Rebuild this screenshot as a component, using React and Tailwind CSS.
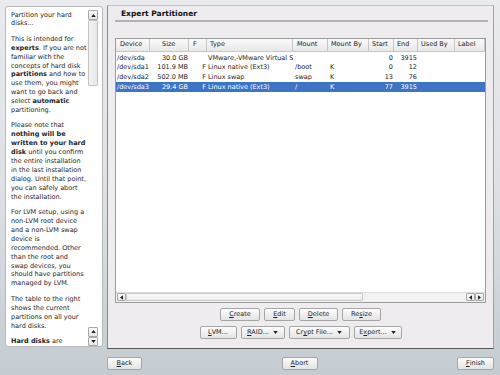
import React from "react";

const FONT = "font-['DejaVu_Sans','Liberation_Sans',sans-serif]";

function Tri({ dir = "down", className = "" }) {
  const pts = {
    down: "0,0 6,0 3,4",
    up: "0,4 6,4 3,0",
    left: "4,0 4,6 0,3",
    right: "0,0 0,6 4,3",
  }[dir];
  const vb = dir === "left" || dir === "right" ? "0 0 4 6" : "0 0 6 4";
  return (
    <svg viewBox={vb} className={className}>
      <polygon points={pts} fill="#222" />
    </svg>
  );
}

function Btn({ className = "", children }) {
  return (
    <div
      className={
        "flex items-center justify-center h-[13px] rounded-[2px] border border-[#a6a6a6] bg-linear-to-b from-[#fdfdfd] to-[#e4e4e4] text-[6.5px] leading-none text-[#222] whitespace-nowrap " +
        className
      }
    >
      {children}
    </div>
  );
}

function U({ children }) {
  return <span className="underline underline-offset-[0.5px] decoration-[0.5px]">{children}</span>;
}

const cols = [
  { label: "Device", w: "w-[34px]", h: "pl-[4px]", c: "pl-[1px]" },
  { label: "Size", w: "w-[39px]", h: "pl-[12px]", c: "justify-end pr-[1px]" },
  { label: "F", w: "w-[18px]", h: "pl-[4px]", c: "justify-end pr-[1px]" },
  { label: "Type", w: "w-[86px]", h: "pl-[3px]", c: "pl-[1px]" },
  { label: "Mount", w: "w-[35px]", h: "pl-[4px]", c: "pl-[2px]" },
  { label: "Mount By", w: "w-[41px]", h: "pl-[3px]", c: "pl-[2px]" },
  { label: "Start", w: "w-[25px]", h: "pl-[3px]", c: "justify-end pr-[1px]" },
  { label: "End", w: "w-[24px]", h: "pl-[3px]", c: "justify-end pr-[1px]" },
  { label: "Used By", w: "w-[37px]", h: "pl-[3px]", c: "pl-[2px]" },
  { label: "Label", w: "w-[30px]", h: "pl-[3px]", c: "pl-[2px]" },
];

const rows = [
  ["/dev/sda", "30.0 GB", "", "VMware,-VMware Virtual S", "", "", "0", "3915", "", ""],
  ["/dev/sda1", "101.9 MB", "F", "Linux native (Ext3)", "/boot", "K", "0", "12", "", ""],
  ["/dev/sda2", "502.0 MB", "F", "Linux swap", "swap", "K", "13", "76", "", ""],
  ["/dev/sda3", "29.4 GB", "F", "Linux native (Ext3)", "/", "K", "77", "3915", "", ""],
];

function LeftHelp() {
  const p = "mb-[6.5px]";
  return (
    <div className="flex-1 overflow-hidden pl-[5px] pt-[3.5px] text-[6.5px] leading-[8.9px] text-[#1e1e1e] whitespace-nowrap">
      <p className={p}>
        Partition your hard
        <br />
        disks...
      </p>
      <p className={p}>
        This is intended for
        <br />
        <b>experts</b>. If you are not
        <br />
        familiar with the
        <br />
        concepts of hard disk
        <br />
        <b>partitions</b> and how to
        <br />
        use them, you might
        <br />
        want to go back and
        <br />
        select <b>automatic</b>
        <br />
        partitioning.
      </p>
      <p className={p}>
        Please note that
        <br />
        <b>nothing will be</b>
        <br />
        <b>written to your hard</b>
        <br />
        <b>disk</b> until you confirm
        <br />
        the entire installation
        <br />
        in the last installation
        <br />
        dialog. Until that point,
        <br />
        you can safely abort
        <br />
        the installation.
      </p>
      <p className={p}>
        For LVM setup, using a
        <br />
        non-LVM root device
        <br />
        and a non-LVM swap
        <br />
        device is
        <br />
        recommended. Other
        <br />
        than the root and
        <br />
        swap devices, you
        <br />
        should have partitions
        <br />
        managed by LVM.
      </p>
      <p className={p}>
        The table to the right
        <br />
        shows the current
        <br />
        partitions on all your
        <br />
        hard disks.
      </p>
      <p>
        <b>Hard disks</b> are
      </p>
    </div>
  );
}

function ArrowBox({ dir, className = "" }) {
  return (
    <div
      className={
        "flex items-center justify-center rounded-[1px] border border-[#a8a8a8] bg-linear-to-b from-[#fbfbfb] to-[#e6e6e6] " +
        className
      }
    >
      <Tri dir={dir} className={dir === "up" || dir === "down" ? "w-[5px] h-[3px]" : "w-[3px] h-[5px]"} />
    </div>
  );
}

export default function App() {
  return (
    <div
      className={
        "w-[500px] h-[375px] overflow-hidden bg-linear-to-b from-[#e9ebee] via-[#dde1e5] to-[#c4ccd2] " +
        FONT
      }
    >
      <div className="flex items-start pt-[5px] pl-[5px] gap-[4px]">
        {/* Left help panel */}
        <div className="mt-[1px] w-[98px] h-[341px] flex rounded-[3px] border border-[#b9b9b9] bg-white">
          <LeftHelp />
          <div className="w-[10px] mr-[4px] mt-[3px] flex flex-col">
            <ArrowBox dir="up" className="h-[10px]" />
            <div className="h-[66px] rounded-[1px] border border-[#c4c4c4] bg-linear-to-r from-[#f4f4f4] to-[#e7e7e7] flex items-center justify-center">
              <div className="w-[5px] h-[6px] bg-[radial-gradient(#bdbdbd_0.5px,transparent_0.6px)] bg-[length:2px_2px]" />
            </div>
            <div className="flex-1" />
            <ArrowBox dir="up" className="h-[9.5px]" />
            <ArrowBox dir="down" className="h-[9.5px]" />
          </div>
        </div>

        {/* Right main panel */}
        <div className="w-[387px] h-[344px] flex flex-col border border-t-[#c2c2c2] border-r-[#a2a2a2] border-l-[#8a8a8a] border-b-[#555555] bg-[#efecf0]">
          <div className="pl-[13px] pt-[3px] h-[13px] text-[7.5px] leading-[10px] font-bold text-[#111]">
            Expert Partitioner
          </div>
          <div className="ml-[7px] mr-[5px] mt-[1px] h-[2px] bg-[#b3b3b3]" />

          {/* Table */}
          <div className="ml-[7px] mr-[7px] mt-[16px] h-[265px] border border-[#9c9c9c] bg-white flex flex-col">
            <div className="flex h-[13px] bg-linear-to-b from-[#fafafa] to-[#e8e8e8] border-b border-[#c8c8c8]">
              {cols.map((c, i) => (
                <div
                  key={i}
                  className={
                    "flex items-center h-full border-r border-[#c6c6c6] text-[6.5px] text-[#222] whitespace-nowrap " +
                    c.w +
                    " " +
                    c.h
                  }
                >
                  {c.label}
                </div>
              ))}
            </div>
            <div className="pt-[1px] flex-1">
              {rows.map((r, ri) => {
                const sel = ri === 3;
                return (
                  <div
                    key={ri}
                    className={
                      "flex h-[9.7px] text-[6.5px] leading-none " +
                      (sel ? "bg-[#3d74c6] text-white" : "text-[#1a1a1a]")
                    }
                  >
                    {cols.map((c, ci) => (
                      <div
                        key={ci}
                        className={"flex items-center overflow-hidden whitespace-nowrap " + c.w + " " + c.c}
                      >
                        {r[ci]}
                      </div>
                    ))}
                  </div>
                );
              })}
            </div>
            {/* horizontal scrollbar */}
            <div className="h-[10px] flex items-stretch px-[1px] pb-[1px] bg-[#f2f2f2] border-t border-[#dcdcdc]">
              <ArrowBox dir="left" className="w-[9px]" />
              <div className="w-[237px] rounded-[1px] border border-[#c8c8c8] bg-linear-to-b from-[#fafafa] to-[#ececec] flex items-center justify-center">
                <div className="w-[10px] h-[5px] bg-[radial-gradient(#c4c4c4_0.5px,transparent_0.6px)] bg-[length:2px_2px]" />
              </div>
              <div className="flex-1" />
              <ArrowBox dir="left" className="w-[9px]" />
              <ArrowBox dir="right" className="w-[9px]" />
            </div>
          </div>

          {/* Button rows */}
          <div className="mt-[5px] flex justify-center gap-[4px]">
            <Btn className="w-[40px]">
              <U>C</U>reate
            </Btn>
            <Btn className="w-[31px]">
              <U>E</U>dit
            </Btn>
            <Btn className="w-[39px]">
              <U>D</U>elete
            </Btn>
            <Btn className="w-[39px]">
              Re<U>s</U>ize
            </Btn>
          </div>
          <div className="mt-[5px] flex justify-center gap-[4px]">
            <Btn className="w-[37px]">
              <U>L</U>VM...
            </Btn>
            <Btn className="w-[44px] gap-[4px]">
              <span>
                <U>R</U>AID...
              </span>
              <Tri className="w-[5px] h-[3px]" />
            </Btn>
            <Btn className="w-[61px] gap-[4px]">
              <span>
                Cr<U>y</U>pt File...
              </span>
              <Tri className="w-[5px] h-[3px]" />
            </Btn>
            <Btn className="w-[48px] gap-[4px]">
              <span>
                E<U>x</U>pert...
              </span>
              <Tri className="w-[5px] h-[3px]" />
            </Btn>
          </div>
        </div>
      </div>

      {/* Bottom buttons */}
      <div className="mt-[8px] pl-[107px] pr-[6px] flex justify-between">
        <Btn className="w-[35px]">
          <U>B</U>ack
        </Btn>
        <Btn className="w-[36px]">
          <U>A</U>bort
        </Btn>
        <Btn className="w-[37px] border-[#7390bd]">
          <U>F</U>inish
        </Btn>
      </div>
    </div>
  );
}
